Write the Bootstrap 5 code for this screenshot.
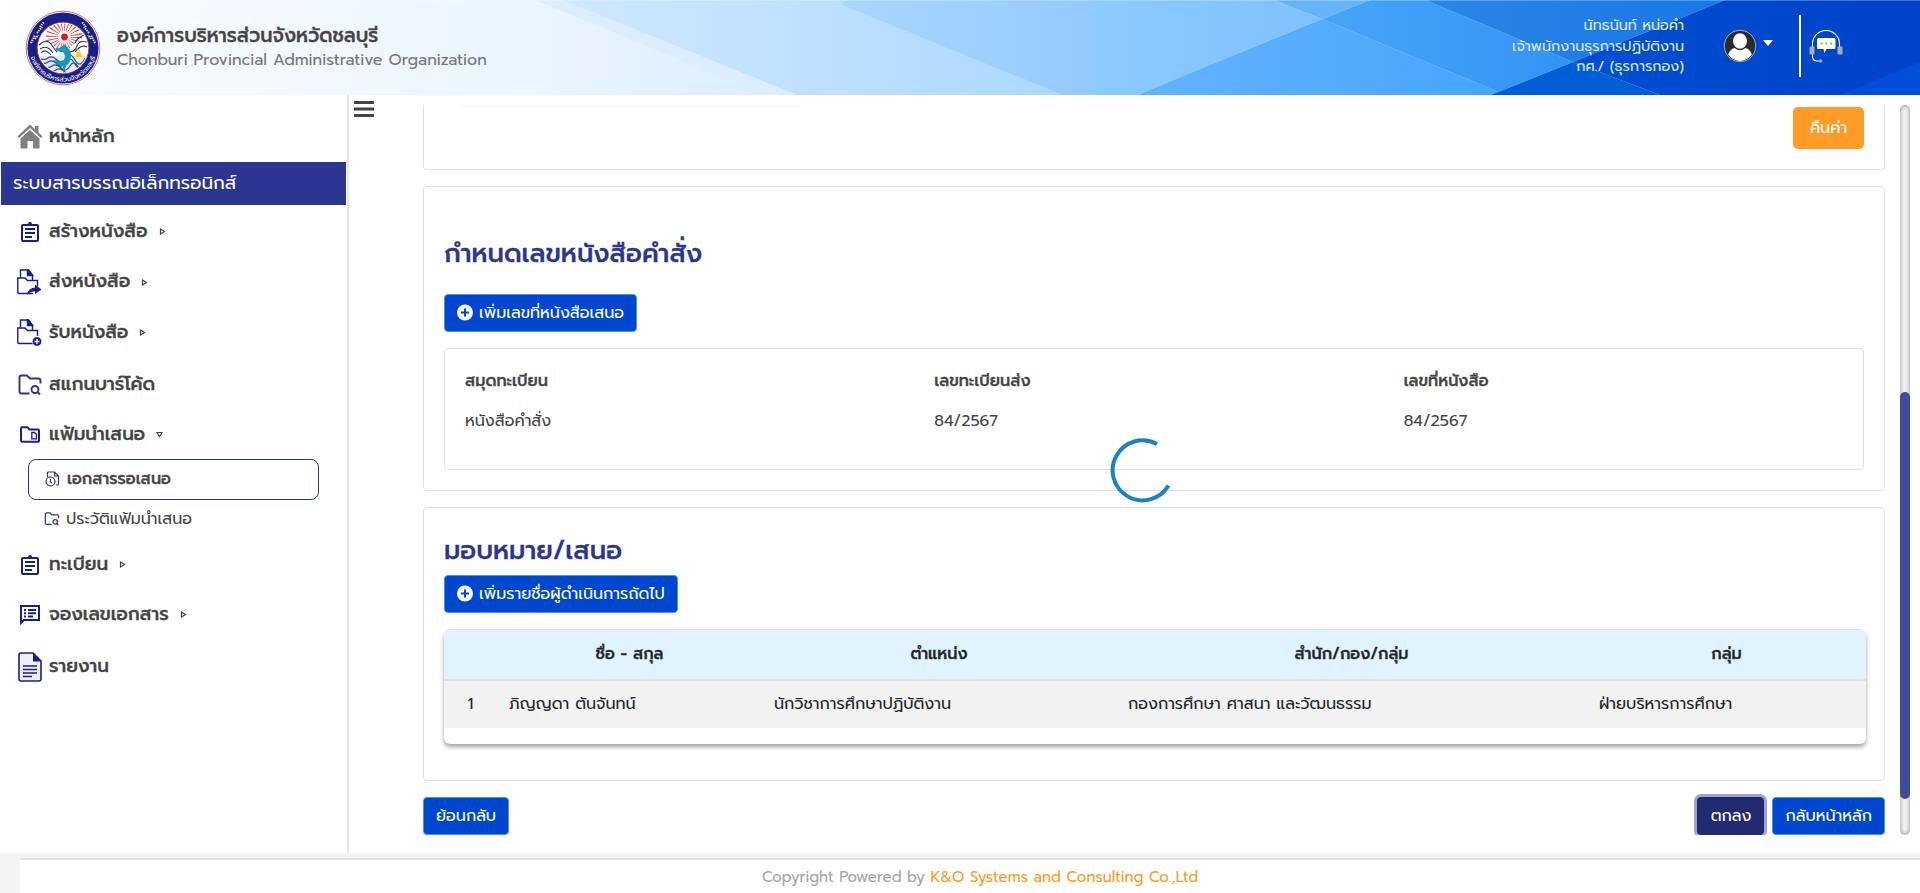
<!DOCTYPE html>
<html lang="th">
<head>
<meta charset="utf-8">
<meta name="viewport" content="width=device-width, initial-scale=1">
<title>ระบบสารบรรณอิเล็กทรอนิกส์</title>
<link href="https://cdn.jsdelivr.net/npm/bootstrap@5.3.0/dist/css/bootstrap.min.css" rel="stylesheet">
<style>
body{font-family:Prompt,"Noto Sans Thai","Noto Sans",sans-serif;font-size:16px;color:#444;height:893px;overflow:hidden;background:#fff}
.topbar{height:95px;overflow:hidden}
.topbar-art{position:absolute;inset:0;width:100%;height:100%}
.org{line-height:25px;margin-left:16px}
.org-th{font-size:19.3px;font-weight:500;color:#444}
.org-en{color:#777}
.org-th,.side-row,.ttl,.inner-pane b,.tbl-wrap th{-webkit-text-stroke:.3px currentColor}
.who{font-size:14.4px;line-height:20.5px;color:#dfe6f2;width:300px;margin-right:39px;padding-top:15px}
.sep{width:2px;height:62px;background:#fff}
.caret{border:5.5px solid transparent;border-top:6px solid #fff;border-bottom:0;margin:0 26.5px 9px 5.5px}
.shell{height:758px}
.side{width:349px;border-right:2px solid #e6e6e6}
.side-row{display:flex;align-items:center;padding-left:17px;font-size:18.4px;font-weight:500}
.side-row svg{flex:none}
.side-row .ico{width:26px;margin-right:6px;display:flex;justify-content:center;flex:none}
.side-row .tri{margin-left:11px}
.h-home{height:67px;padding-top:16px}
.side-row.h-band{height:43px;margin:0 1px;padding-left:12px;background:#2a368f;color:#fff;font-weight:400;-webkit-text-stroke:0}
.h45{height:45px}.h47{height:47px}.h48{height:48px}.h53{height:53px}.h52{height:52px}.h55{height:55px}.h60{height:60px}.h37{height:37px}
.side-row.sub-row{font-size:16px;font-weight:400;padding-left:43px;-webkit-text-stroke:0}
.sub-row .ico{width:17px;margin-right:6px}
.side-row.sub-on{height:41px;margin:1px 28px 0;border:1px solid #2a368f;border-radius:8px;font-weight:500;padding-left:15px;padding-bottom:1px;-webkit-text-stroke:.3px currentColor}
.work{height:730px;width:1462px;margin-top:10px;overflow:hidden}
.pane{border:1px solid #dee2e6;border-radius:4px;background:#fff}
.pane-1{height:65px;border-top:0;border-radius:0 0 4px 4px}
.pane-2{height:305px;padding:0 20px}
.pane-3{height:274px;padding:0 20px}
.faint{width:338px;height:2px;margin-left:37px;background:linear-gradient(#f3f3f3,#fff)}
.ttl{font-size:25.75px;font-weight:500;color:#2a368f;line-height:38px;margin:0}
.btn{font-size:16px;line-height:24px;border-radius:4px;padding:6px 12px}
.btn-main{background:#0047cf;border-color:#4a90f0;color:#fff}
.btn-add{padding-left:11px}
.btn-add svg{margin-right:5px}
.btn-reset{background:#ff9c27;color:#fff;height:42px;width:71px;padding:0;border:0;border-radius:5px;margin:2px 20px 0}
.btn-ok{background:#222b72;border-color:#1f2769;color:#fff;box-shadow:0 0 0 3px #9fa5d0;width:67px;margin-right:8px}
.inner-pane{height:122px;padding:20px 5px}
.inner-pane>div{padding:0 0 0 15px}
.inner-pane b{font-weight:500;display:block;line-height:24px}
.inner-pane span{display:block;line-height:24px;margin-top:16px}
.tbl-wrap{height:115px;width:1422px;border-radius:6px;overflow:hidden;box-shadow:0 3px 4px rgba(0,0,0,.36);background:#fff}
.tbl-wrap table{table-layout:fixed;margin:0;color:#212529;width:1422px}
.tbl-wrap th{background:#e0f3ff;height:50px;border-top:1px solid #dee2e6;border-bottom:2px solid #dee2e6;font-weight:500;text-align:center;vertical-align:middle;padding:0 12px}
.tbl-wrap td{background:#f2f2f2;height:48px;border:0;padding:0 12px;vertical-align:middle}
.track{width:10px;height:730px;margin:10px 0 0 15px;border-radius:5px;background:#f5f5f5;box-shadow:inset 0 0 5px #888;padding-top:287px}
.thumb{height:407px;border-radius:5px;background:#3f4b9d}
.foot-gap{height:5px;background:#f4f4f4}
.foot{height:35px;border-left:20px solid #f4f4f4}
.foot-in{border-top:2px solid #e2e2e2;font-size:15px;line-height:34px;color:#a6a6a6;padding-left:20px}
.foot-in a{color:#ff9c27;text-decoration:none}
.spin{position:absolute;left:1108.5px;top:437px}
</style>
</head>
<body>
<header class="topbar position-relative d-flex align-items-center">
  <svg class="topbar-art" viewBox="0 0 1920 95" preserveAspectRatio="none">
    <defs>
      <linearGradient id="ga" gradientUnits="userSpaceOnUse" x1="0" x2="770" y1="0" y2="0"><stop offset="0" stop-color="#fff"/><stop offset=".15" stop-color="#f7fbff"/><stop offset=".45" stop-color="#f1f8ff"/><stop offset=".7" stop-color="#e9f5ff"/><stop offset="1" stop-color="#dceeff"/></linearGradient>
      <linearGradient id="gb" gradientUnits="userSpaceOnUse" x1="563" x2="1063" y1="0" y2="0"><stop offset="0" stop-color="#cfe7ff"/><stop offset=".5" stop-color="#bee0ff"/><stop offset="1" stop-color="#abd8ff"/></linearGradient>
      <linearGradient id="gc" gradientUnits="userSpaceOnUse" x1="840" x2="1322" y1="0" y2="0"><stop offset="0" stop-color="#a9d6ff"/><stop offset=".5" stop-color="#96caff"/><stop offset=".54" stop-color="#8ccaff"/><stop offset="1" stop-color="#7fc1ff"/></linearGradient>
      <linearGradient id="gd" gradientUnits="userSpaceOnUse" x1="1137" x2="1506" y1="0" y2="0"><stop offset="0" stop-color="#63b3ff"/><stop offset="1" stop-color="#45a5fb"/></linearGradient>
      <linearGradient id="ge" gradientUnits="userSpaceOnUse" x1="1322" x2="1573" y1="0" y2="0"><stop offset="0" stop-color="#47a5f9"/><stop offset="1" stop-color="#3393f1"/></linearGradient>
      <linearGradient id="gf" gradientUnits="userSpaceOnUse" x1="1425" x2="1725" y1="0" y2="0"><stop offset="0" stop-color="#2d86e6"/><stop offset="1" stop-color="#1877e6"/></linearGradient>
      <linearGradient id="gh" gradientUnits="userSpaceOnUse" x1="1573" x2="1920" y1="0" y2="0"><stop offset="0" stop-color="#0050d2"/><stop offset="1" stop-color="#0041c8"/></linearGradient>
    </defs>
    <rect width="1920" height="95" fill="url(#ga)"/>
    <path d="M535 0H563L797 95H765Z" fill="#dbedff"/>
    <path d="M563 0H1000L1063 95H797Z" fill="url(#gb)"/>
    <path d="M848 0H1274L1322 19 1137 95H1063L840 4Z" fill="url(#gc)"/>
    <path d="M1274 0H1370L1322 19Z" fill="#66b4f8"/>
    <path d="M1137 95 1322 19 1506 95Z" fill="url(#gd)"/>
    <path d="M1322 19 1370 0H1425L1573 62 1491 95H1506Z" fill="url(#ge)"/>
    <path d="M1425 0H1725L1573 62Z" fill="url(#gf)"/>
    <path d="M1491 95 1573 62 1660 95Z" fill="#005dd8"/>
    <path d="M1725 0H1920V95H1660L1573 62Z" fill="url(#gh)"/>
    <path d="M1840 95 1920 62V95Z" fill="#004fd6"/>
    <path d="M0 0H1920V1H0Z" fill="#fff" opacity=".25"/>
  </svg>
  <svg class="position-relative" style="margin-left:25px" width="76" height="76" viewBox="-38 -38 76 76">
    <defs><path id="arcb" d="M-33.500 0A33.500 33.500 0 0 0 33.500 0"/><clipPath id="cin"><circle r="24.500"/></clipPath></defs>
    <circle r="36.800" fill="#fff" stroke="#d66" stroke-width="1"/><circle r="35.600" fill="#15208a"/>
    <circle r="25.800" fill="#fff" stroke="#c33" stroke-width=".8"/>
    <g clip-path="url(#cin)">
      <circle cx="1" cy="-11" r="12" fill="none" stroke="#e33" stroke-width="12" stroke-dasharray=".9 2.240"/>
      <path d="M-26-1Q-18-9-11-4L-6 2 6 1 14-7 26-4V28H-26Z" fill="#fff"/>
      <path d="M-24-3Q-16-10-12-4T-6 4M-23 1Q-16-4-10 5M-22 5Q-18 0-12 7M24-6Q16-8 14-2T6 4M24-1Q18-4 12 4M21-13Q14-10 12-5" fill="none" stroke="#23328f" stroke-width="1.100"/>
      <path d="M-25 8H25V26H-25Z" fill="#dfe8f6"/>
      <path d="M-24 10q5 3 9 0t9 2 9-2 9 2 10-2M-24 14q5 3 9 0t9 2 9-2 9 2 10-2M-20 18q5 3 9 0t9 2 9-2 9 2M-16 22q5 3 9 0t9 2 9-2" fill="none" stroke="#2a4b9c" stroke-width="1.200"/>
      <path d="M16 1l4 8h-6zM15 0v9h-3z" fill="#f2d21b"/>
    </g>
    <circle cx="1.500" cy="-11" r="3.400" fill="#f0101c"/>
    <path d="M1-4Q-1 0-9 1-4 5 0 4 2 6 2 9 2 13-3 13L-10 12-5 17 0 18 .5 26 3 18Q8 14 8 8 8 1 1-4Z" fill="#139bb9"/>
    <text font-size="6.500" fill="#fff" text-anchor="middle"><textPath href="#arcb" startOffset="50%">องค์การบริหารส่วนจังหวัดชลบุรี</textPath></text>
    <path d="M-32-5l4-8M-28-9l3-4M-26-15l5-6M-23-21l4-5M32-5l-4-8M28-9l-3-4M26-15l-5-6M23-21l-4-5" stroke="#e6e8f5" stroke-width="2" stroke-dasharray="1.400 .9"/>
  </svg>
  <div class="org position-relative flex-grow-1">
    <div class="org-th">องค์การบริหารส่วนจังหวัดชลบุรี</div>
    <div class="org-en">Chonburi Provincial Administrative Organization</div>
  </div>
  <div class="who position-relative align-self-start text-end">นัทธนันท์ หน่อคำ<br>เจ้าพนักงานธุรการปฏิบัติงาน<br>กศ./ (ธุรการกอง)</div>
  <svg class="position-relative" width="34" height="34" viewBox="0 0 34 34" style="margin-bottom:3px"><circle cx="17" cy="17" r="15.800" fill="#2b2b2b" stroke="#bcd" stroke-width=".8"/><ellipse cx="17" cy="12" rx="7" ry="7.800" fill="#fff"/><path d="M5.200 25.500Q7 20 11.500 19 17 23.500 22.500 19 27 20 28.800 25.500 24 32 17 32 10 32 5.200 25.500Z" fill="#fff"/></svg>
  <div class="caret position-relative"></div>
  <div class="sep position-relative" style="margin-bottom:3px"></div>
  <svg class="position-relative" style="margin:0 76px 3px 7px" width="36" height="36" viewBox="0 0 36 36"><path d="M4.500 19V16A13.500 13.500 0 0 1 31.500 16V19M4.500 26V28Q4.500 33 9 33H11" fill="none" stroke="#fff" stroke-width="1.100"/><rect x="1.500" y="18.500" width="5" height="8" rx="1" fill="#a5adb8"/><rect x="29.500" y="18.500" width="5" height="8" rx="1" fill="#a5adb8"/><circle cx="12.500" cy="33" r="1.800" fill="#a5adb8"/><path d="M10.500 10H26Q27.500 10 27.500 11.500V19.500Q27.500 21 26 21H18.500L16.500 25 15.500 21H10.500Q9 21 9 19.500V11.500Q9 10 10.500 10Z" fill="#fff"/><path d="M12.500 14.500h2v2h-2zM17.200 14.500h2v2h-2zM22 14.500h2v2h-2z" fill="#7ed321"/></svg>
</header>

<div class="shell d-flex">
  <nav class="side flex-shrink-0">
    <div class="side-row h-home"><span class="ico"><svg width="26" height="25" viewBox="0 0 26 25" fill="#808080"><path d="M13 .5 18 5.200V2h3.500v6.500L25.500 12.300 24 14 13 4 2 14 .5 12.300Z"/><path d="M13 6 22.500 14.500V24.500H16V17H10.500V24.500H3.500V14.500Z"/></svg></span>หน้าหลัก</div>
    <div class="side-row h-band">ระบบสารบรรณอิเล็กทรอนิกส์</div>
    <div class="side-row h53"><span class="ico"><svg width="18" height="20" viewBox="0 0 18 20"><use href="#clip"/></svg></span>สร้างหนังสือ<svg class="tri" width="7" height="7"><use href="#tr"/></svg></div>
    <div class="side-row h48"><span class="ico"><svg width="26" height="27" viewBox="0 0 26 27"><use href="#fdoc"/><path d="M10 26Q11 19 18 18.500V15.500L24.500 20.500 18 25V22.500Q13 22 10 26Z" fill="#14208c"/></svg></span>ส่งหนังสือ<svg class="tri" width="7" height="7"><use href="#tr"/></svg></div>
    <div class="side-row h53"><span class="ico"><svg width="26" height="27" viewBox="0 0 26 27"><use href="#fdoc"/><circle cx="20" cy="22.500" r="4.700" fill="#14208c" stroke="#fff" stroke-width=".6"/><path d="M17.500 22.500h5M20 20v5" stroke="#fff" stroke-width="1.300"/></svg></span>รับหนังสือ<svg class="tri" width="7" height="7"><use href="#tr"/></svg></div>
    <div class="side-row h52"><span class="ico"><svg width="24" height="22" viewBox="0 0 24 22"><use href="#fsearch"/></svg></span>สแกนบาร์โค้ด</div>
    <div class="side-row h47"><span class="ico"><svg width="20" height="17" viewBox="0 0 20 17" fill="none" stroke="#14208c" stroke-width="2"><path d="M1 3V14.500Q1 15.800 2 15.800H18Q19 15.800 19 14.800V4.500Q19 3.500 18 3.500H9.500L7.500 1.200H2Q1 1.200 1 2.500Z"/><path d="M11.800 6.500h2.700l2 2v4.300h-4.700z" stroke-width="1.300"/></svg></span>แฟ้มนำเสนอ<svg class="tri" width="7" height="7"><path d="M1 1.500H6L3.500 5.500Z" fill="none" stroke="#444" stroke-width="1.200"/></svg></div>
    <div class="side-row sub-row sub-on"><span class="ico"><svg width="15" height="16" viewBox="0 0 15 16" fill="none" stroke="#2a368f" stroke-width="1.200"><path d="M2.500 6V2Q2.500 1 3.500 1H9.500L13.500 5V13Q13.500 14 12.500 14H11M9.500 1V5H13.500"/><circle cx="5.500" cy="10.500" r="4.500"/><path d="M5.500 8V11L7 12"/></svg></span>เอกสารรอเสนอ</div>
    <div class="side-row sub-row h37"><span class="ico"><svg width="16" height="14" viewBox="0 0 24 22"><use href="#fsearch"/></svg></span>ประวัติแฟ้มนำเสนอ</div>
    <div class="side-row h55"><span class="ico"><svg width="18" height="20" viewBox="0 0 18 20"><use href="#clip"/></svg></span>ทะเบียน<svg class="tri" width="7" height="7"><use href="#tr"/></svg></div>
    <div class="side-row h45"><span class="ico"><svg width="20" height="20" viewBox="0 0 20 20"><path d="M1 1H19V15H4L1 18Z" fill="none" stroke="#14208c" stroke-width="2"/><path d="M4 4h2v2H4zM4 7.300h2v2H4zM4 10.500h2v2H4zM8 4h8v2H8zM8 7.300h8v2H8zM8 10.500h5v2H8z" fill="#14208c"/></svg></span>จองเลขเอกสาร<svg class="tri" width="7" height="7"><use href="#tr"/></svg></div>
    <div class="side-row h60"><span class="ico"><svg width="24" height="30" viewBox="0 0 24 30"><path d="M3 1H15L23 9V27Q23 29 21 29H3Q1 29 1 27V3Q1 1 3 1Z" fill="#eef0fa" stroke="#14208c" stroke-width="1.600"/><path d="M15 1V9.500H23Z" fill="#14208c"/><path d="M5 14h14M5 17.500h14M5 21h14M5 24.500h9" stroke="#14208c" stroke-width="1.500"/></svg></span>รายงาน</div>
  </nav>

  <svg class="flex-shrink-0" style="margin:6px 49px 0 5px" width="20" height="17"><path d="M0 0h20v3H0zM0 6.500h20v3H0zM0 13h20v3H0z" fill="#444"/></svg>

  <main class="work flex-shrink-0">
    <section class="pane pane-1 d-flex justify-content-between"><div class="faint"></div><button class="btn btn-reset">คืนค่า</button></section>
    <section class="pane pane-2 mt-3">
      <h2 class="ttl" style="padding-top:48px">กำหนดเลขหนังสือคำสั่ง</h2>
      <button class="btn btn-main btn-add d-inline-flex align-items-center" style="margin-top:21px"><svg width="18" height="18" viewBox="0 0 18 18"><circle cx="9" cy="8.500" r="8" fill="#fff"/><path d="M5 8.500h8M9 4.500v8" stroke="#0047cf" stroke-width="2"/></svg>เพิ่มเลขที่หนังสือเสนอ</button>
      <div class="pane inner-pane row mx-0 mt-3">
        <div class="col-4"><b>สมุดทะเบียน</b><span>หนังสือคำสั่ง</span></div>
        <div class="col-4"><b>เลขทะเบียนส่ง</b><span>84/2567</span></div>
        <div class="col-4"><b>เลขที่หนังสือ</b><span>84/2567</span></div>
      </div>
    </section>
    <section class="pane pane-3 mt-3">
      <h2 class="ttl" style="padding-top:24px">มอบหมาย/เสนอ</h2>
      <button class="btn btn-main btn-add d-inline-flex align-items-center" style="margin-top:5px"><svg width="18" height="18" viewBox="0 0 18 18"><circle cx="9" cy="8.500" r="8" fill="#fff"/><path d="M5 8.500h8M9 4.500v8" stroke="#0047cf" stroke-width="2"/></svg>เพิ่มรายชื่อผู้ดำเนินการถัดไป</button>
      <div class="tbl-wrap mt-3">
        <table>
          <colgroup><col style="width:53px"><col style="width:265px"><col style="width:354px"><col style="width:471px"><col style="width:279px"></colgroup>
          <thead><tr><th></th><th>ชื่อ - สกุล</th><th>ตำแหน่ง</th><th>สำนัก/กอง/กลุ่ม</th><th>กลุ่ม</th></tr></thead>
          <tbody><tr><td class="text-center">1</td><td>ภิญญดา ตันจันทน์</td><td>นักวิชาการศึกษาปฏิบัติงาน</td><td>กองการศึกษา ศาสนา และวัฒนธรรม</td><td>ฝ่ายบริหารการศึกษา</td></tr></tbody>
        </table>
      </div>
    </section>
    <div class="d-flex mt-3">
      <button class="btn btn-main me-auto">ย้อนกลับ</button>
      <button class="btn btn-ok">ตกลง</button>
      <button class="btn btn-main">กลับหน้าหลัก</button>
    </div>
  </main>
  <div class="track flex-shrink-0"><div class="thumb"></div></div>
</div>
<div class="foot-gap"></div>
<footer class="foot"><div class="foot-in text-center">Copyright Powered by <a href="#">K&amp;O Systems and Consulting Co.,Ltd</a></div></footer>

<svg class="spin" width="66" height="66" viewBox="-33 -33 66 66"><path d="M15-26A30 30 0 1 0 26.500 15.500" fill="none" stroke="#1a80cc" stroke-width="4"/></svg>

<svg width="0" height="0" class="position-absolute">
  <defs>
    <path id="tr" d="M1.500 1V6L5.500 3.500Z" fill="none" stroke="#444" stroke-width="1.200"/>
    <g id="clip"><path d="M2 3H16Q17 3 17 4V18Q17 19 16 19H2Q1 19 1 18V4Q1 3 2 3Z" fill="none" stroke="#14208c" stroke-width="2"/><path d="M5 2H7Q7 0 9 0T11 2H13V4H5Z" fill="#14208c"/><path d="M4 7h10M4 11h10M4 15h7" stroke="#14208c" stroke-width="1.800"/></g>
    <g id="fdoc" fill="none" stroke="#14208c" stroke-width="1.400"><path d="M3.500 8.500V1H11.500L15.500 6V11"/><path d="M10.500 .5V6.500H15.500Z" fill="#14208c"/><path d="M16 24.500H2Q.8 24.500.8 23.500V9H8L10.500 11.500H20.500V17"/></g>
    <g id="fsearch" fill="none" stroke="#2a368f" stroke-width="1.900"><path d="M11.500 19.500H3.500Q1.500 19.500 1.500 17.500V3.500Q1.500 1.500 3.500 1.500H9L12 4.500H20.500Q22.500 4.500 22.500 6.500V9.500"/><circle cx="17" cy="15.500" r="3.500"/><path d="M19.500 18 22 20.500"/></g>
  </defs>
</svg>
<script src="https://cdn.jsdelivr.net/npm/bootstrap@5.3.0/dist/js/bootstrap.bundle.min.js"></script>
</body>
</html>
